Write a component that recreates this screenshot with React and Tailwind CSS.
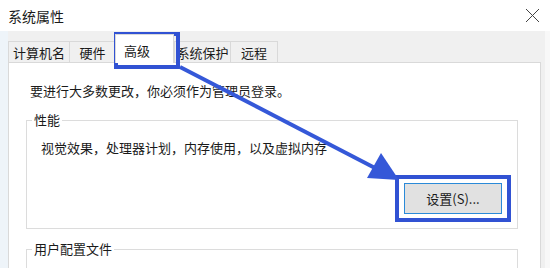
// 系统属性 - 高级 标签页（带标注）
export default function App() {
  const tabs = [
    { label: '计算机名', w: 'w-[61px]' },
    { label: '硬件', w: 'w-[46px]' },
  ]
  const tabsAfter = [
    { label: '系统保护', w: 'w-[56px]' },
    { label: '远程', w: 'w-[48px]', last: true },
  ]

  return (
    <div className="relative w-[550px] h-[268px] overflow-hidden bg-white text-[13px] leading-[18px] text-[#1a1a1a] font-['Noto_Sans_CJK_SC','Microsoft_YaHei',sans-serif]">
      {/* 标题栏 */}
      <div className="h-[31px] flex items-center justify-between pl-[8px] pr-[10px]">
        <span className="text-[14px]">系统属性</span>
        <svg width="15" height="15" viewBox="0 0 15 15">
          <path d="M1 1 L14 14 M14 1 L1 14" stroke="#444" strokeWidth="1" />
        </svg>
      </div>

      <div className="flex h-[237px]">
        <div className="w-[8px] bg-[#eef4f9]" />
        <div className="flex-1 bg-[#f0f0f0] flex flex-col pr-[4px]">
          {/* 标签 */}
          <div className="h-[31px] flex items-end shrink-0">
            {tabs.map(t => (
              <div key={t.label} className={`${t.w} h-[21px] border-t border-l border-[#d9d9d9] flex items-center justify-center pt-[1px]`}>
                {t.label}
              </div>
            ))}
            <div className="relative z-10 -mb-px w-[59px] h-[29px] bg-white border-t border-l border-r border-[#d9d9d9] flex items-center pl-[8px] pt-[4px]">
              高级
            </div>
            {tabsAfter.map(t => (
              <div key={t.label} className={`${t.w} h-[21px] border-t border-l border-[#d9d9d9] flex items-center justify-center pt-[1px] ${t.last ? 'border-r' : ''}`}>
                {t.label}
              </div>
            ))}
          </div>

          {/* 面板 */}
          <div className="flex-1 bg-white border border-b-0 border-[#d9d9d9] pt-[19px] pl-[21px] pr-[22px]">
            <p>要进行大多数更改，你必须作为管理员登录。</p>

            <fieldset className="mt-[11px] ml-[-4px] border border-[#dcdcdc] px-[14px] pb-[6px]">
              <legend className="ml-[-9px] px-[2px]">性能</legend>
              <p className="pt-[10px]">视觉效果，处理器计划，内存使用，以及虚拟内存</p>
              <div className="flex justify-end mt-[18px] mr-[-8px]">
                <div className="border-4 border-[#3152d3] bg-white px-[5px] py-[4px]">
                  <button className="w-[98px] h-[31px] bg-[#e1e1e1] border border-[#2a8ad8] text-[13px] leading-none">
                    设置(S)...
                  </button>
                </div>
              </div>
            </fieldset>

            <fieldset className="mt-[11px] ml-[-4px] h-[40px] border border-[#dcdcdc] px-[14px]">
              <legend className="ml-[-9px] px-[2px]">用户配置文件</legend>
            </fieldset>
          </div>
        </div>
        <div className="w-[5px] bg-[#f8f8f8]" />
      </div>

      {/* 标注：标签高亮框 */}
      <div className="absolute left-[114px] top-[32px] w-[66px] h-[37px] border-4 border-[#3152d3]" />

      {/* 标注：箭头 */}
      <svg className="absolute inset-0 pointer-events-none" width="550" height="268">
        <line x1="180" y1="67" x2="375" y2="168" stroke="#3558d8" strokeWidth="4" />
        <polygon points="399,180 367,178 381,153" fill="#3558d8" />
      </svg>
    </div>
  )
}
